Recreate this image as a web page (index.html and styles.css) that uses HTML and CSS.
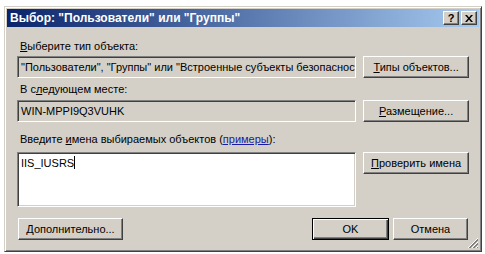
FILE: index.html
```html
<!DOCTYPE html>
<html lang="ru">
<head>
<meta charset="utf-8">
<title>Выбор</title>
<link rel="stylesheet" href="styles.css">
</head>
<body>
<div class="window">
  <div class="titlebar">
    <span class="title">Выбор: "Пользователи" или "Группы"</span>
    <span class="cbtn help">?</span>
    <span class="cbtn close">
      <svg width="8" height="7" viewBox="0 0 8 7"><path d="M0 0h2l2 2.5L6 0h2L5 3.5L8 7H6L4 4.5L2 7H0l3-3.5z" fill="#000"/></svg>
    </span>
  </div>
  <div class="content">
    <div class="label"><u>В</u>ыберите тип объекта:</div>
    <div class="row">
      <div class="field">"Пользователи", "Группы" или "Встроенные субъекты безопасности"</div>
      <button class="btn"><u>Т</u>ипы объектов...</button>
    </div>
    <div class="label l2">В с<u>л</u>едующем месте:</div>
    <div class="row r2">
      <div class="field">WIN-MPPI9Q3VUHK</div>
      <button class="btn"><u>Р</u>азмещение...</button>
    </div>
    <div class="label l3">Введите <u>и</u>мена выбираемых объектов (<span class="link">примеры</span>):</div>
    <div class="row r3">
      <div class="field area">IIS_IUSRS<span class="caret"></span></div>
      <button class="btn"><u>П</u>роверить имена</button>
    </div>
    <div class="footer">
      <button class="btn more"><u>Д</u>ополнительно...</button>
      <span class="spacer"></span>
      <button class="btn ok">OK</button>
      <button class="btn cancel">Отмена</button>
    </div>
  </div>
  <svg class="grip" width="12" height="12" viewBox="0 0 12 12">
    <path d="M11 1L1 11M11 5L5 11M11 9L9 11" stroke="#fff" stroke-width="1"/>
    <path d="M11 2L2 11M11 3L3 11M11 6L6 11M11 7L7 11M11 10L10 11" stroke="#808080" stroke-width="1"/>
  </svg>
</div>
</body>
</html>
```
FILE: styles.css
```css
body {
  margin: 0;
  background: #fff;
  font-family: "Liberation Sans", Arial, sans-serif;
  font-size: 11px;
  color: #000;
}

.window {
  position: relative;
  margin: 6px 0 0 4px;
  width: 478px;
  height: 246px;
  box-sizing: border-box;
  background: #d4d0c8;
  border: 1px solid;
  border-color: #d4d0c8 #404040 #404040 #d4d0c8;
  box-shadow: inset 1px 1px #fff, inset -1px -1px #808080;
  padding: 2px;
  display: flex;
  flex-direction: column;
}

.titlebar {
  height: 18px;
  background: linear-gradient(to right, #0a246a, #a6caf0);
  display: flex;
  align-items: center;
  padding: 0 2px 0 3px;
}

.title {
  flex: 1;
  color: #fff;
  font-weight: bold;
  font-size: 12px;
  white-space: nowrap;
}

.cbtn {
  width: 16px;
  height: 14px;
  box-sizing: border-box;
  margin-left: 2px;
  background: #d4d0c8;
  border: 1px solid;
  border-color: #fff #404040 #404040 #fff;
  box-shadow: inset -1px -1px #808080;
  display: flex;
  align-items: center;
  justify-content: center;
  font-weight: bold;
  font-size: 11px;
  line-height: 12px;
}

.content {
  flex: 1;
  padding: 13px 10px 0 10px;
  display: flex;
  flex-direction: column;
}

.label {
  height: 13px;
  line-height: 13px;
  padding-left: 3px;
  white-space: nowrap;
}

.label.l2 { margin-top: 5px; }
.label.l3 { margin-top: 11px; }

.row {
  display: flex;
  align-items: flex-start;
  gap: 7px;
  margin-top: 3px;
}

.row.r2 { margin-top: 4px; }
.row.r3 { margin-top: 6px; }

.field {
  box-sizing: border-box;
  width: 340px;
  height: 22px;
  border: 1px solid;
  border-color: #808080 #fff #fff #808080;
  box-shadow: inset 1px 1px #404040, inset -1px -1px #d4d0c8;
  padding: 0 3px;
  line-height: 20px;
  white-space: nowrap;
  overflow: hidden;
}

.field.area {
  height: 55px;
  background: #fff;
  line-height: 14px;
  padding-top: 3px;
}

.caret {
  display: inline-block;
  width: 1px;
  height: 13px;
  background: #000;
  vertical-align: -2px;
}

.link {
  color: #1a1aa6;
  text-decoration: underline;
}

.btn {
  width: 106px;
  height: 22px;
  box-sizing: border-box;
  padding: 0;
  margin: 0;
  background: #d4d0c8;
  border: 1px solid;
  border-color: #fff #404040 #404040 #fff;
  box-shadow: inset -1px -1px #808080;
  font: inherit;
  color: #000;
  text-align: center;
}

.footer {
  display: flex;
  align-items: center;
  margin-top: 11px;
}

.spacer { flex: 1; }

.btn.more { width: 105px; margin-left: 1px; }

.btn.ok {
  width: 77px;
  border: 1px solid #000;
  box-shadow: inset 1px 1px #fff, inset -1px -1px #404040, inset -2px -2px #808080;
}

.btn.cancel {
  width: 75px;
  margin-left: 4px;
  margin-right: 1px;
}

.grip {
  position: absolute;
  right: 2px;
  bottom: 2px;
}
```
